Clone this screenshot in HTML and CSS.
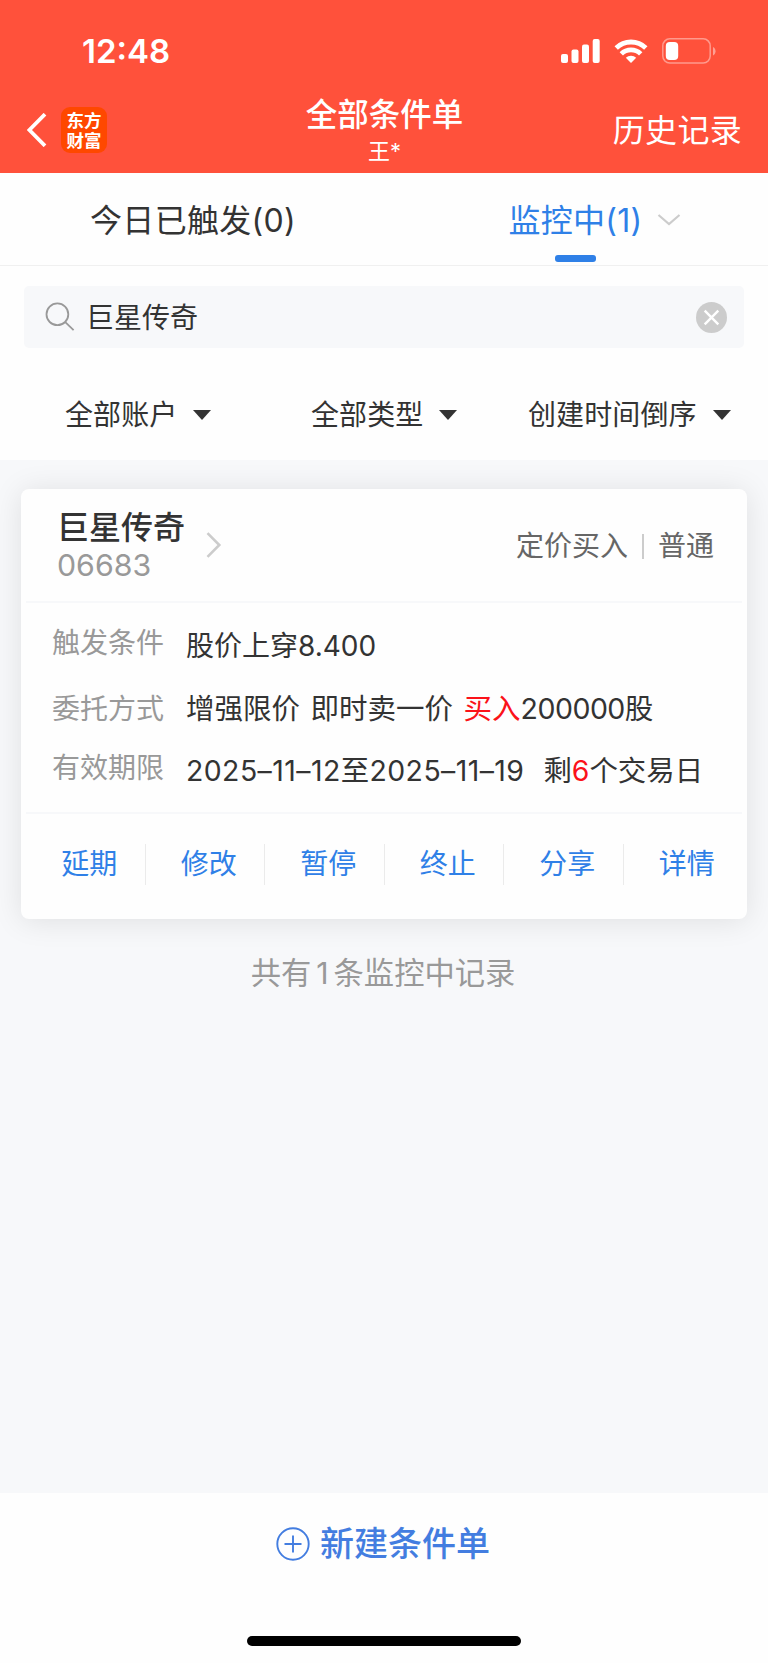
FILE: index.html
```html
<!DOCTYPE html>
<html lang="zh-CN">
<head>
  <meta charset="UTF-8">
  <title>全部条件单</title>
  <link rel="stylesheet" href="styles.css">
</head>
<body>
  <header class="header">
    <div class="status">
      <span class="time">12:48</span>
      <svg class="signal" width="39" height="24" viewBox="0 0 39 24" fill="#fff">
        <rect x="0" y="15" width="7" height="9" rx="2"/>
        <rect x="10.5" y="10.5" width="7" height="13.5" rx="2"/>
        <rect x="21" y="5.5" width="7" height="18.5" rx="2"/>
        <rect x="31.7" y="0" width="7" height="24" rx="2"/>
      </svg>
      <svg class="wifi" width="34" height="24" viewBox="0 0 34 24" fill="none" stroke="#fff" stroke-width="4.8">
        <path d="M2.2 9a21.200 21.200 0 0 1 29.600 0"/>
        <path d="M7.3 14.900a13.900 13.900 0 0 1 19.400 0"/>
        <path d="M17 24l-5.200-5.200a7.500 7.500 0 0 1 10.400 0z" fill="#fff" stroke="none"/>
      </svg>
      <svg class="battery" width="54" height="26" viewBox="0 0 54 26">
        <rect x="0.8" y="0.8" width="47.4" height="24.2" rx="7" fill="none" stroke="#fff" stroke-opacity="0.42" stroke-width="1.5"/>
        <rect x="3.8" y="4" width="12.4" height="18" rx="4" fill="#fff"/>
        <path d="M51 9v8.4c3.4-1.6 3.4-6.8 0-8.4z" fill="#fff" fill-opacity="0.45"/>
      </svg>
    </div>
    <div class="nav">
      <div class="nav-left">
        <svg width="20" height="34" viewBox="0 0 20 34" fill="none" stroke="#fff" stroke-width="3.8">
          <path d="M18 1.2L2.4 17 18 32.8"/>
        </svg>
        <div class="logo">东方<br>财富</div>
      </div>
      <div class="nav-title">
        <h1>全部条件单</h1>
        <p>王*</p>
      </div>
      <a class="history">历史记录</a>
    </div>
  </header>

  <nav class="tabs">
    <div class="tab">今日已触发(0)</div>
    <div class="tab active">
      <span>监控中(1)</span>
      <svg width="24" height="12" viewBox="0 0 24 12" fill="none" stroke="#ccc" stroke-width="2.2">
        <path d="M1.5 1l10.5 9L22.5 1"/>
      </svg>
    </div>
  </nav>

  <div class="search">
    <svg width="30" height="30" viewBox="0 0 30 30" fill="none" stroke="#999" stroke-width="1.8">
      <circle cx="12.4" cy="12.3" r="10.9"/>
      <path d="M20 19.8l8.600 8.400"/>
    </svg>
    <span>巨星传奇</span>
    <svg class="clear" width="31" height="31" viewBox="0 0 31 31">
      <circle cx="15.5" cy="15.5" r="15.5" fill="#ccc"/>
      <path d="M8.7 8.7l13.600 13.600M22.300 8.700L8.700 22.300" stroke="#fff" stroke-width="2.4"/>
    </svg>
  </div>

  <div class="filters">
    <div class="filter">全部账户<i class="caret"></i></div>
    <div class="filter">全部类型<i class="caret"></i></div>
    <div class="filter">创建时间倒序<i class="caret"></i></div>
  </div>

  <main class="list">
    <section class="card">
      <div class="card-head">
        <div class="stock">
          <h2>巨星传奇</h2>
          <p>06683</p>
        </div>
        <svg width="16" height="26" viewBox="0 0 16 26" fill="none" stroke="#ccc" stroke-width="2.6">
          <path d="M1.5 1.2L13.3 13 1.5 24.8"/>
        </svg>
        <div class="kind"><span>定价买入</span><i></i><span>普通</span></div>
      </div>
      <dl class="info">
        <div class="row trigger"><dt>触发条件</dt><dd>股价上穿8.400</dd></div>
        <div class="row method"><dt>委托方式</dt><dd>增强限价 即时卖一价 <em>买入</em><span class="qty">200000股</span></dd></div>
        <div class="row period"><dt>有效期限</dt><dd><span class="date">2025–11–12至2025–11–19</span><span class="left">剩<em>6</em>个交易日</span></dd></div>
      </dl>
      <div class="actions">
        <a>延期</a>
        <a>修改</a>
        <a>暂停</a>
        <a>终止</a>
        <a>分享</a>
        <a>详情</a>
      </div>
    </section>
    <p class="total">共有<span>1</span>条监控中记录</p>
  </main>

  <footer class="footer">
    <a class="create">
      <svg width="34" height="34" viewBox="0 0 34 34" fill="none" stroke="#437de0" stroke-width="1.9">
        <circle cx="17" cy="17" r="15.7"/>
        <path d="M17 8.500v17M8.500 17h17"/>
      </svg>
      <span>新建条件单</span>
    </a>
    <div class="home-bar"></div>
  </footer>
</body>
</html>
```
FILE: styles.css
```css
* { box-sizing: border-box; margin: 0; padding: 0; }
body {
  display: flex;
  flex-direction: column;
  width: 768px;
  height: 1663px;
  background: #fefefe;
  color: #333;
  font-family: Inter, "Noto Sans CJK SC", sans-serif;
  font-size: 28px;
  line-height: 36px;
  white-space: nowrap;
}
svg { display: block; flex: none; }
em { color: #fb1219; font-style: normal; }

.header { height: 173px; background: #ff513b; color: #fff; }
.status { display: flex; align-items: center; height: 88px; padding: 14px 52px 0 82px; }
.time { font-size: 33px; font-weight: 600; }
.signal { margin-left: auto; }
.wifi { margin-left: 14px; }
.battery { margin-left: 14px; }

.nav { display: grid; grid-template-columns: 1fr auto 1fr; height: 85px; padding: 0 26px 0 27px; }
.nav-left { display: flex; align-items: center; gap: 14px; padding-bottom: 1px; }
.logo {
  width: 46px;
  height: 46px;
  padding-top: 3px;
  border-radius: 9px;
  background: #ff4800;
  font-family: "Noto Sans CJK SC", sans-serif;
  font-size: 17.5px;
  font-weight: 700;
  line-height: 19.5px;
  text-align: center;
}
.nav-title { padding-top: 9px; text-align: center; }
.nav-title h1 { font-size: 31.5px; font-weight: 500; line-height: 36px; }
.nav-title p { padding-top: 4px; font-size: 22px; line-height: 28px; }
.history { justify-self: end; padding-top: 25px; font-size: 32px; letter-spacing: 0.3px; }

.tabs { display: flex; height: 93px; border-bottom: 1px solid #f0f0f0; font-size: 32px; }
.tab { width: 50%; padding: 30px 0 0 2px; text-align: center; letter-spacing: 0.3px; }
.active { position: relative; display: flex; justify-content: center; gap: 14px; padding-left: 37px; color: #2f80e7; }
.active svg { margin-top: 11px; }
.active::after {
  content: "";
  position: absolute;
  left: 171px;
  bottom: 3px;
  width: 41px;
  height: 7px;
  border-radius: 3px;
  background: #2f80e7;
}

.search {
  display: flex;
  align-items: center;
  height: 62px;
  margin: 20px 24px 0;
  padding: 0 17px 0 21px;
  border-radius: 5px;
  background: #f7f8fa;
}
.search span { padding-top: 2px; margin-left: 11px; }
.clear { margin-left: auto; }

.filters { display: grid; grid-template-columns: 246px 217px auto; height: 112px; padding: 49px 0 0 65px; }
.filter { display: flex; align-items: center; height: 36px; letter-spacing: 0.1px; }
.caret { margin-left: 16px; border: 9.5px solid transparent; border-top: 10px solid #333; border-bottom: 0; }

.list { flex: 1; padding: 29px 21px 0; background: #f7f8fa; }
.card { height: 430px; padding: 0 5px; border-radius: 8px; background: #fefefe; box-shadow: 0 2px 30px rgba(0, 0, 0, 0.1); }
.card-head { display: flex; align-items: center; height: 114px; padding: 0 28px 0 31px; border-bottom: 2px solid #f7f8fa; }
.stock { width: 149px; padding-top: 2px; }
.stock h2 { font-size: 32px; font-weight: 500; line-height: 38px; }
.stock p { color: #999; font-size: 30.3px; line-height: 37px; }
.kind { display: flex; align-items: center; padding-top: 1px; margin-left: auto; color: #666; }
.kind i { width: 2px; height: 25px; margin: 2px 14px 0; background: #ccc; }

.info { height: 211px; border-bottom: 2px solid #f7f8fa; }
.row { display: flex; padding-left: 26px; }
.row dt { width: 134px; color: #999; }
.trigger { padding-top: 22px; }
.trigger dd { padding-top: 3px; }
.method { padding-top: 27px; }
.method dd { font-size: 28.5px; word-spacing: 2.5px; }
.qty { letter-spacing: -0.5px; }
.period { padding-top: 23px; }
.period dd { padding-top: 3px; font-size: 28.4px; }
.date { letter-spacing: 0.45px; }
.left { margin-left: 19px; }

.actions { display: flex; padding-top: 30px; color: #2f80e7; }
.actions a { flex: 1; height: 41px; padding-left: 8px; line-height: 41px; text-align: center; }
.actions a + a { border-left: 1px solid #ebebeb; }
.total { padding: 36px 2px 0 0; color: #999; font-size: 30.3px; text-align: center; }
.total span { margin: 0 5px; }

.footer { display: flex; flex-direction: column; align-items: center; height: 170px; }
.create { display: flex; align-items: center; gap: 10px; padding: 33px 2px 0 0; color: #437de0; font-size: 34px; font-weight: 500; }
.home-bar { width: 274px; height: 10px; margin-top: auto; margin-bottom: 17px; border-radius: 5px; background: #000; }
```
